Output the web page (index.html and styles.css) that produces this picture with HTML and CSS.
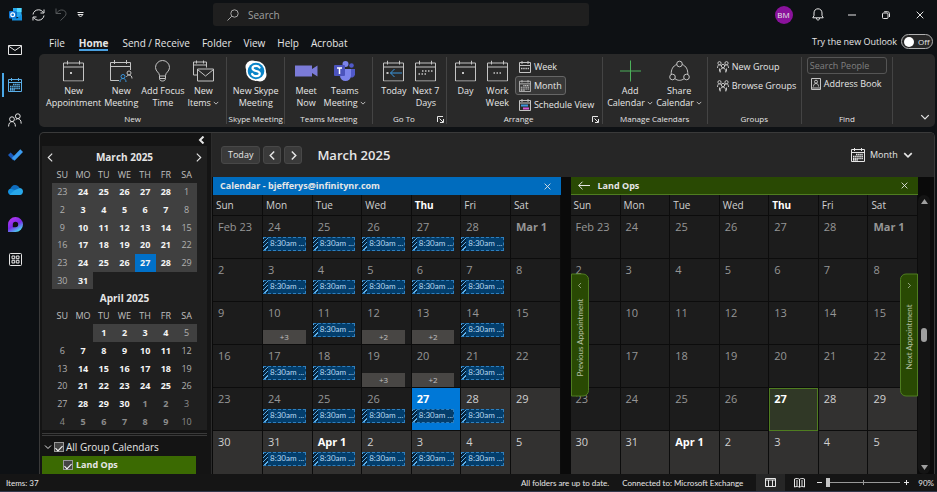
FILE: index.html
```html
<!DOCTYPE html>
<html lang="en">
<head>
    <meta charset="UTF-8">
    <meta name="viewport" content="width=device-width, initial-scale=1.0">
    <title>Calendar - Outlook</title>
    <link rel="stylesheet" href="styles.css">
</head>
<body>

    <!-- Shared icons -->
    <svg class="sprite" aria-hidden="true">
        <symbol id="i-cal" viewBox="0 0 21 21">
            <path d="M.5 2.5h20v18H.5zM.5 6.5h20M4.5 0v4M16.5 0v4" />
        </symbol>
        <symbol id="i-month" viewBox="0 0 14 14">
            <path d="M.5 1.5h13v12H.5zM.5 4.5h13M3.5 0v3M10.5 0v3" />
            <path d="M5 6.5h7M2 8.5h10M2 10.5h10M2 12h5" stroke-dasharray="1.5 .6" stroke-width="1.3" />
        </symbol>
        <symbol id="i-people" viewBox="0 0 14 14">
            <circle cx="9.8" cy="3.2" r="2.4" /><circle cx="4" cy="6.2" r="2.4" />
            <path d="M.6 13.5c0-3 1.400-4.900 3.400-4.900s3.400 1.900 3.400 4.900M7.500 7.200c.6-1 1.400-1.500 2.300-1.500 2 0 3.400 1.900 3.400 4.900" />
        </symbol>
        <symbol id="i-group" viewBox="0 0 12 12">
            <circle cx="2.500" cy="2.200" r="1.600" /><circle cx="9.500" cy="2.200" r="1.600" /><circle cx="6" cy="5" r="1.700" />
            <path d="M.5 7c0-2 .8-3.200 2-3.200.7 0 1.300.4 1.600 1M11.500 7c0-2-.8-3.200-2-3.200-.7 0-1.300.4-1.600 1M3.200 11.500c0-3 1-4.500 2.800-4.500s2.800 1.500 2.800 4.500M2.500 7.500v3M9.500 7.500v3" />
        </symbol>
        <symbol id="i-down" viewBox="0 0 8 8"><path d="M1 2.500l3 3 3-3" /></symbol>
        <symbol id="i-left" viewBox="0 0 8 8"><path d="M5.500 .5L2 4l3.500 3.500" /></symbol>
        <symbol id="i-right" viewBox="0 0 8 8"><path d="M2.500 .5L6 4 2.500 7.500" /></symbol>
        <symbol id="i-close" viewBox="0 0 8 8"><path d="M.7.7l6.600 6.600M7.300.7L.7 7.300" /></symbol>
        <symbol id="i-launch" viewBox="0 0 7 7"><path d="M.5 6V.5H6M2.500 2.500l3.500 3.500M6.500 3v3.500H3" /></symbol>
    </svg>

    <!-- Title bar -->
    <header class="titlebar">
        <div class="quick">
            <svg class="icon" width="13" height="13" viewBox="0 0 13 13">
                <path fill="#28a8ea" d="M4 0h8.500v9H4z" /><path fill="#50d9ff" d="M8 0h4.500v4H8z" /><path fill="#0364b8" d="M4 4h4v5H4z" />
                <path fill="#1490df" d="M3 8l5 2.500L13 6v6.500H3z" /><rect fill="#0f78d4" y="3" width="7.500" height="7.500" rx="1" />
                <circle cx="3.700" cy="6.700" r="1.900" fill="none" stroke="#fff" stroke-width="1.200" />
            </svg>
            <button aria-label="Send/Receive all folders"><svg class="icon line" width="13" height="12" viewBox="0 0 13 12"><path d="M1 5.500C1.300 2.800 3.700.8 6.500.8c2 0 3.800 1 4.700 2.600M12 .5v3.500H8.500M12 6.500c-.3 2.700-2.700 4.700-5.500 4.700-2 0-3.800-1-4.700-2.600M1 11.500V8h3.500" /></svg></button>
            <button aria-label="Undo" class="dim"><svg class="icon line" width="12" height="13" viewBox="0 0 12 13"><path d="M1 .5v5h5M1.300 5.300C3 3 4.800 2 6.800 2c2.500 0 4.200 1.600 4.200 3.700 0 1-.4 1.900-1.200 2.700L5.500 12.500" /></svg></button>
            <button aria-label="Customize toolbar"><svg class="icon line" width="7" height="6" viewBox="0 0 7 6"><path d="M.5.5h6M1 2.500h5L3.500 5z" /></svg></button>
        </div>
        <label class="search">
            <svg class="icon line" width="12" height="12" viewBox="0 0 12 12"><circle cx="7.500" cy="4.500" r="3.700" /><path d="M4.800 7.200L.5 11.500" /></svg>
            <input type="search" placeholder="Search" aria-label="Search">
        </label>
        <div class="window-buttons">
            <button aria-label="Account"><span class="avatar">BM</span></button>
            <button aria-label="Notifications"><svg class="icon line" width="12" height="13" viewBox="0 0 12 13"><path d="M.8 9.800h10.400L10 7.500V5c0-2.500-1.600-4.200-4-4.200S2 2.500 2 5v2.500zM4.500 10c0 1.500.6 2 1.500 2s1.500-.5 1.500-2" /></svg></button>
            <button aria-label="Minimize"><svg class="icon line" width="8" height="8" viewBox="0 0 8 8"><path d="M0 4h8" /></svg></button>
            <button aria-label="Restore"><svg class="icon line" width="8" height="8" viewBox="0 0 8 8"><rect x=".5" y="2" width="5.500" height="5.500" rx="1" /><path d="M2.200.7h3.300c1.200 0 2 .8 2 2v3.300" /></svg></button>
            <button aria-label="Close"><svg class="icon line" width="8" height="8"><use href="#i-close" /></svg></button>
        </div>
    </header>

    <div class="shell">
        <!-- App rail -->
        <nav class="rail" aria-label="Apps">
            <button aria-label="Mail"><svg class="icon line" width="14" height="10" viewBox="0 0 14 10"><path d="M.5.500h13v9H.5zM.5 1l6.500 4.500L13.500 1" /></svg></button>
            <button aria-label="Calendar" class="active"><svg class="icon line" width="14" height="14"><use href="#i-month" /></svg></button>
            <button aria-label="People"><svg class="icon line" width="14" height="14"><use href="#i-people" /></svg></button>
            <button aria-label="To Do"><svg class="icon" width="15" height="12" viewBox="0 0 15 12"><path fill="#195abd" d="M0 6l2.600-2.600L7.700 8.500 5.200 11.500z" /><path fill="#3c9cf0" d="M12.300.3L15 3 6.500 11.700 3.900 9z" /></svg></button>
            <button aria-label="OneDrive"><svg class="icon" width="15" height="10" viewBox="0 0 15 10"><path fill="#0f6cbd" d="M2 5C2.500 2 4.500 0 7 0c2.200 0 4 1.300 4.700 3.200L7 6.500z" /><path fill="#1490df" d="M2.500 3.800C1 4 0 5.300 0 6.800 0 8.600 1.400 10 3 10l6.500-4z" /><path fill="#28a8ea" d="M7 5l4.700-1.900C13.500 3.100 15 4.600 15 6.500S13.600 10 12 10H3L1.500 9.500z" /></svg></button>
            <button aria-label="Loop"><svg class="icon" width="15" height="15" viewBox="0 0 15 15">
                <defs><linearGradient id="loop" x1="0" y1="0" x2=".6" y2="1"><stop offset="0" stop-color="#c03bf0" /><stop offset=".6" stop-color="#7a2be8" /><stop offset="1" stop-color="#49d6f0" /></linearGradient></defs>
                <path fill="url(#loop)" fill-rule="evenodd" d="M0 15V7.500a7.500 7.500 0 1 1 7.500 7.500zM7.500 4.800a2.700 2.700 0 0 0-2.700 2.700v2.700h2.700a2.700 2.700 0 0 0 0-5.400z" /></svg></button>
            <button aria-label="More apps"><svg class="icon line" width="13" height="13" viewBox="0 0 13 13"><rect x=".5" y=".5" width="12" height="12" rx="1" /><path d="M3 3h2.700v2.700H3zM7.300 3H10v2.700H7.300zM3 7.300h2.700V10H3zM7.300 7.300H10V10H7.300z" /></svg></button>
        </nav>

        <div class="workspace">
            <!-- Ribbon tabs -->
            <nav class="tabs" aria-label="Ribbon tabs">
                <button>File</button>
                <button class="active">Home</button>
                <button>Send / Receive</button>
                <button>Folder</button>
                <button>View</button>
                <button>Help</button>
                <button>Acrobat</button>
                <label class="try-new">Try the new Outlook
                    <span class="switch"><input type="checkbox" role="switch"><span>Off</span></span>
                </label>
            </nav>

            <!-- Ribbon -->
            <section class="ribbon">
                <div class="group">
                    <div class="tools">
                        <button class="tool"><svg class="icon line" width="21" height="21" viewBox="0 0 21 21"><use href="#i-cal" /><path d="M7 12.500h2" stroke-width="2" /></svg><span>New<br>Appointment</span></button>
                        <button class="tool"><svg class="icon line" width="23" height="22" viewBox="0 0 23 22"><path d="M9 20.500H.5v-18h20V10M.5 6.500h20M4.500 0v4M16.500 0v4" /><g stroke="#3a96dd"><circle cx="13" cy="16.500" r="2" /><path d="M10 22c0-2.200 1.200-3.500 3-3.500s3 1.300 3 3.500" /></g><circle cx="19" cy="13" r="2" /><path d="M16.500 17c.5-1.300 1.400-2 2.500-2 1.800 0 3 1.300 3 3.500" /></svg><span>New<br>Meeting</span></button>
                        <button class="tool"><svg class="icon line" width="15" height="21" viewBox="0 0 15 21"><path d="M4.500 15c0-3-4-4-4-8a7 7 0 0 1 14 0c0 4-4 5-4 8v3c0 1.500-1 2.500-3 2.500s-3-1-3-2.500zM4.500 15.500h6M4.500 18h6" /></svg><span>Add Focus<br>Time</span></button>
                        <button class="tool"><svg class="icon line" width="21" height="21" viewBox="0 0 21 21"><path d="M4 14.500H.5v-13h13V7M.5 4.500h13M3.500 0v3M10.500 0v3M4.500 8.500h16v12h-16zM4.500 9l8 6.500 8-6.500" /></svg><span>New<br>Items <svg class="icon line" width="6" height="6"><use href="#i-down" /></svg></span></button>
                    </div>
                    <div class="caption"><span>New</span></div>
                </div>
                <div class="group">
                    <div class="tools">
                        <button class="tool"><svg class="icon" width="22" height="22" viewBox="0 0 22 22"><circle cx="11" cy="11" r="10" fill="#fff" /><circle cx="7" cy="7" r="6.500" fill="#fff" /><circle cx="15" cy="15" r="6.500" fill="#fff" /><circle cx="11" cy="11" r="8.300" fill="#0a84c8" /><path d="M14.500 7.500C13.500 6 12 5.800 11 5.800c-2 0-3.500 1-3.500 2.500 0 3.700 7.300 1.700 7.300 5.200 0 1.700-1.600 2.700-3.700 2.700-1.700 0-3.200-.6-4-2.200" fill="none" stroke="#fff" stroke-width="2.200" stroke-linecap="round" /></svg><span>New Skype<br>Meeting</span></button>
                    </div>
                    <div class="caption"><span>Skype Meeting</span></div>
                </div>
                <div class="group">
                    <div class="tools">
                        <button class="tool"><svg class="icon" width="23" height="21" viewBox="0 0 23 21"><path fill="#7b7bd8" d="M0 5h17v3.500L22.500 5v11L17 12.500V16H0z" /></svg><span>Meet<br>Now</span></button>
                        <button class="tool"><svg class="icon" width="21" height="21" viewBox="0 0 21 21"><circle cx="17.500" cy="5" r="2.300" fill="#5059c9" /><circle cx="11.500" cy="3.500" r="3" fill="#7b83eb" /><path fill="#5059c9" d="M14 8.500h7V14a3.500 3.500 0 0 1-6 2z" /><path fill="#7b83eb" d="M6 8.500h11V15a5.500 5.500 0 0 1-11 0z" /><rect y="4.500" width="11" height="11" rx="1" fill="#4b53bc" /><path d="M3 7.500h5M5.500 7.500v6" stroke="#fff" stroke-width="1.500" /></svg><span>Teams<br>Meeting <svg class="icon line" width="6" height="6"><use href="#i-down" /></svg></span></button>
                    </div>
                    <div class="caption"><span>Teams Meeting</span></div>
                </div>
                <div class="group">
                    <div class="tools">
                        <button class="tool"><svg class="icon line" width="21" height="21" viewBox="0 0 21 21"><use href="#i-cal" /><path d="M3.500 12.500h2" stroke-width="2" /><path stroke="#3a96dd" d="M7.500 12.500H19M11.500 8.500l-4 4 4 4" /></svg><span>Today</span></button>
                        <button class="tool"><svg class="icon line" width="21" height="21" viewBox="0 0 21 21"><use href="#i-cal" /><path d="M7 10.500h11M3.500 13.500h8" stroke-width="1.500" stroke-dasharray="1.500 1.500" /></svg><span>Next 7<br>Days</span></button>
                    </div>
                    <div class="caption"><span>Go To</span><button aria-label="Go To options"><svg class="icon line" width="7" height="7"><use href="#i-launch" /></svg></button></div>
                </div>
                <div class="group">
                    <div class="tools">
                        <button class="tool"><svg class="icon line" width="21" height="21" viewBox="0 0 21 21"><use href="#i-cal" /><path d="M7 12.500h2" stroke-width="2" /></svg><span>Day</span></button>
                        <button class="tool"><svg class="icon line" width="21" height="21" viewBox="0 0 21 21"><use href="#i-cal" /><path d="M6.500 12.500h8" stroke-width="1.500" stroke-dasharray="1.500 1.500" /></svg><span>Work<br>Week</span></button>
                        <div class="stack">
                            <button class="row"><svg class="icon line" width="12" height="12" viewBox="0 0 12 12"><path d="M.5 1.500h11v10H.5zM.5 4.500h11M3 0v3M9 0v3" /><path d="M2 7.500h8" stroke-width="1.500" stroke-dasharray="1.500 .7" /></svg>Week</button>
                            <button class="row active"><svg class="icon line" width="12" height="12"><use href="#i-month" /></svg>Month</button>
                            <button class="row"><svg class="icon line" width="12" height="12" viewBox="0 0 12 12"><path d="M.5 1.500h11v10H.5zM.5 4h11M3 0v3M9 0v3" /><path stroke="#3a96dd" stroke-width="2" d="M2 6.500h7" /><path stroke="#d659d6" stroke-width="2" d="M4 9.500h6" /></svg>Schedule View</button>
                        </div>
                    </div>
                    <div class="caption"><span>Arrange</span><button aria-label="Arrange options"><svg class="icon line" width="7" height="7"><use href="#i-launch" /></svg></button></div>
                </div>
                <div class="group">
                    <div class="tools">
                        <button class="tool"><svg class="icon line green" width="21" height="21" viewBox="0 0 21 21"><path d="M10.500 0v21M0 10.500h21" /></svg><span>Add<br>Calendar <svg class="icon line" width="6" height="6"><use href="#i-down" /></svg></span></button>
                        <button class="tool"><svg class="icon line" width="21" height="21" viewBox="0 0 21 21"><circle cx="10.500" cy="3.500" r="2.800" /><circle cx="3.500" cy="16.500" r="2.800" /><circle cx="17.500" cy="16.500" r="2.800" /><path d="M7.700 4C4 5.500 2 9 2.200 13.800M13.300 4c3.700 1.500 5.700 5 5.500 9.800M6 18.200c2.800 2.200 6.200 2.200 9 0" /></svg><span>Share<br>Calendar <svg class="icon line" width="6" height="6"><use href="#i-down" /></svg></span></button>
                    </div>
                    <div class="caption"><span>Manage Calendars</span></div>
                </div>
                <div class="group">
                    <div class="tools start">
                        <div class="stack">
                            <button class="row"><svg class="icon line" width="12" height="12"><use href="#i-group" /></svg>New Group</button>
                            <button class="row"><svg class="icon line" width="12" height="12"><use href="#i-group" /></svg>Browse Groups</button>
                        </div>
                    </div>
                    <div class="caption"><span>Groups</span></div>
                </div>
                <div class="group">
                    <div class="tools start">
                        <div class="stack find">
                            <input type="text" placeholder="Search People" aria-label="Search People">
                            <button class="row"><svg class="icon line" width="10" height="12" viewBox="0 0 10 12"><path d="M.5.5h9v11h-9zM.5 10h9" /><circle cx="5" cy="3.700" r="1.500" /><path d="M2.500 8.500c0-2 1-3 2.500-3s2.500 1 2.500 3" /></svg>Address Book</button>
                        </div>
                    </div>
                    <div class="caption"><span>Find</span></div>
                </div>
                <button class="collapse" aria-label="Collapse ribbon"><svg class="icon line" width="10" height="10"><use href="#i-down" /></svg></button>
            </section>

            <main class="content">
                <!-- Date navigator and calendar list -->
                <aside class="sidebar">
                    <button class="fold" aria-label="Collapse pane"><svg class="icon line bold" width="8" height="8"><use href="#i-left" /></svg></button>
                    <div class="navigator">
                        <div class="months">
                            <table class="mini" id="mini-march"></table>
                            <table class="mini" id="mini-april"></table>
                        </div>
                        <button class="prev" aria-label="Previous month"><svg class="icon line" width="9" height="9"><use href="#i-left" /></svg></button>
                        <button class="next" aria-label="Next month"><svg class="icon line" width="9" height="9"><use href="#i-right" /></svg></button>
                    </div>
                    <div class="calendar-list">
                        <label class="all"><svg class="icon line" width="8" height="8"><use href="#i-down" /></svg><input type="checkbox" checked>All Group Calendars</label>
                        <label class="item"><input type="checkbox" checked>Land Ops</label>
                    </div>
                </aside>

                <section class="view">
                    <div class="view-bar">
                        <button class="box">Today</button>
                        <button class="box arrow" aria-label="Previous"><svg class="icon line" width="9" height="9"><use href="#i-left" /></svg></button>
                        <button class="box arrow" aria-label="Next"><svg class="icon line" width="9" height="9"><use href="#i-right" /></svg></button>
                        <h1>March 2025</h1>
                        <label class="view-picker">
                            <svg class="icon line" width="14" height="14"><use href="#i-month" /></svg>
                            <select aria-label="View">
                                <option>Month</option>
                                <option>Week</option>
                                <option>Day</option>
                            </select>
                            <svg class="icon line" width="10" height="10"><use href="#i-down" /></svg>
                        </label>
                    </div>

                    <div class="calendars">
                        <div class="calendar blue">
                            <div class="calendar-head">
                                <h2>Calendar - bjefferys@infinitynr.com</h2>
                                <button aria-label="Close calendar"><svg class="icon line" width="7" height="7"><use href="#i-close" /></svg></button>
                            </div>
                            <div class="sheet"><table class="month" id="mine"></table></div>
                        </div>
                        <div class="calendar green">
                            <div class="calendar-head">
                                <button aria-label="Overlay"><svg class="icon line" width="12" height="9" viewBox="0 0 12 9"><path d="M.7 4.500H12M4.500.7L.7 4.500l3.800 3.800" /></svg></button>
                                <h2>Land Ops</h2>
                                <button aria-label="Close calendar"><svg class="icon line" width="7" height="7"><use href="#i-close" /></svg></button>
                            </div>
                            <div class="sheet">
                                <table class="month" id="ops"></table>
                                <button class="handle before"><svg class="icon line" width="6" height="6"><use href="#i-left" /></svg><span>Previous Appointment</span></button>
                                <button class="handle after"><svg class="icon line" width="6" height="6"><use href="#i-right" /></svg><span>Next Appointment</span></button>
                            </div>
                        </div>
                        <div class="scrollbar" aria-hidden="true">
                            <svg width="7" height="5" viewBox="0 0 7 5"><path d="M3.500 0L7 5H0z" /></svg>
                            <span class="thumb"></span>
                            <svg width="7" height="5" viewBox="0 0 7 5"><path d="M3.500 5L7 0H0z" /></svg>
                        </div>
                    </div>
                </section>
            </main>
        </div>
    </div>

    <!-- Status bar -->
    <footer class="status">
        <span class="count">Items: 37</span>
        <span>All folders are up to date.</span>
        <span>Connected to: Microsoft Exchange</span>
        <div class="modes">
            <button class="active" aria-label="Normal view"><svg class="icon line" width="11" height="9" viewBox="0 0 11 9"><path d="M.5.500h10v8H.5zM.5 2h10M3.500 2v6.500M7.500 2v6.500" /></svg></button>
            <button aria-label="Reading view"><svg class="icon line" width="11" height="10" viewBox="0 0 11 10"><path d="M.5 1c2-.7 3.700-.7 5 .3 1.300-1 3-1 5-.3v8c-2-.7-3.700-.7-5 .3-1.300-1-3-1-5-.3zM5.500 1v8M2 3h2M2 5h2M2 7h2M7 3h2M7 5h2M7 7h2" /></svg></button>
        </div>
        <div class="zoom">
            <button aria-label="Zoom out"><svg class="icon line" width="5" height="5" viewBox="0 0 5 5"><path d="M0 2.500h5" /></svg></button>
            <input type="range" min="0" max="100" value="0" aria-label="Zoom">
            <button aria-label="Zoom in"><svg class="icon line" width="5" height="5" viewBox="0 0 5 5"><path d="M0 2.500h5M2.500 0v5" /></svg></button>
            <span>90%</span>
        </div>
    </footer>

    <script src="script.js"></script>
</body>
</html>
```
FILE: styles.css
```css
/* Base */
* {
    box-sizing: border-box;
}
body {
    margin: 0;
    height: 100vh;
    display: flex;
    flex-direction: column;
    background: #0e1114;
    color: #e6e6e6;
    font-family: "Open Sans", "Noto Sans", sans-serif;
    font-size: 9px;
    line-height: 12px;
    overflow: hidden;
}
button,
input,
select {
    margin: 0;
    padding: 0;
    border: 0;
    background: none;
    color: inherit;
    font: inherit;
}
button {
    display: flex;
    align-items: center;
    justify-content: center;
    white-space: nowrap;
}
h1,
h2 {
    margin: 0;
}
table {
    border-collapse: collapse;
    table-layout: fixed;
}
.sprite {
    position: absolute;
    width: 0;
    height: 0;
}
.icon {
    flex: none;
}
.line {
    fill: none;
    stroke: currentColor;
    stroke-width: 1;
}
.bold {
    stroke-width: 2;
}
.green.line {
    stroke: #4cb05a;
}

/* Title bar */
.titlebar {
    display: flex;
    align-items: center;
    height: 29px;
    flex: none;
}
.quick {
    display: flex;
    align-items: center;
    gap: 10px;
    width: 213px;
    padding-left: 9px;
}
.quick .dim {
    color: #55585a;
}
.search {
    display: flex;
    align-items: center;
    gap: 9px;
    flex: 0 1 376px;
    height: 23px;
    padding: 0 14px;
    border-radius: 3px;
    background: #1f1f1f;
    color: #a8a8a8;
    font-size: 10px;
}
.search input {
    flex: 1;
    outline: 0;
}
::placeholder {
    color: #a0a0a0;
    opacity: 1;
}
.window-buttons {
    display: flex;
    margin-left: auto;
}
.window-buttons button {
    width: 34px;
    height: 28px;
}
.window-buttons button:first-child {
    width: 35px;
}
.avatar {
    width: 18px;
    border-radius: 50%;
    background: #8a129c;
    font-size: 8px;
    line-height: 18px;
}

/* Shell */
.shell {
    display: flex;
    flex: 1;
    min-height: 0;
}
.rail {
    display: flex;
    flex-direction: column;
    width: 39px;
    padding-top: 3px;
}
.rail button {
    width: 30px;
    height: 35px;
}
.rail .active {
    position: relative;
    color: #5aaee8;
}
.rail .active::before {
    content: "";
    position: absolute;
    left: 2px;
    width: 2px;
    height: 24px;
    background: #4aa8e8;
}
.workspace {
    display: flex;
    flex: 1;
    flex-direction: column;
    min-width: 0;
    padding-right: 2px;
}

/* Tabs */
.tabs {
    display: flex;
    align-items: center;
    gap: 12px;
    height: 25px;
    flex: none;
    padding-left: 10px;
    font-size: 10px;
}
.tabs button {
    height: 18px;
    padding-top: 4px;
    border-bottom: 2px solid transparent;
}
.tabs .active {
    margin: 0 2px;
    border-color: #4aa0e0;
    font-weight: 700;
}
.try-new {
    display: flex;
    align-items: center;
    gap: 4px;
    margin-left: auto;
    padding-right: 2px;
    font-size: 9px;
    white-space: nowrap;
}
.switch {
    display: flex;
    align-items: center;
    gap: 4px;
    width: 32px;
    height: 15px;
    padding-left: 2px;
    border: 1px solid #b0b0b0;
    border-radius: 8px;
    background: #262626;
    font-size: 8px;
}
.switch input {
    appearance: none;
    width: 10px;
    height: 10px;
    border-radius: 50%;
    background: #fff;
}

/* Ribbon */
.ribbon {
    display: grid;
    grid-template-columns: 188fr 58fr 88fr 74fr 155fr 105fr 94fr 91fr 42fr;
    flex: none;
    height: 73px;
    border-radius: 5px;
    background: #292929;
}
.group {
    display: flex;
    flex-direction: column;
    min-width: 0;
    margin: 3px 0;
    border-right: 1px solid #444;
}
.tools {
    display: flex;
    flex: 1;
    justify-content: center;
    gap: 3px;
    padding-top: 3px;
}
.tools.start {
    justify-content: flex-start;
    padding-left: 5px;
}
.tool {
    flex-direction: column;
    justify-content: flex-start;
    gap: 3px;
    min-width: 29px;
}
.tool > .icon,
.row .icon {
    color: #c4c4c4;
}
.tool > .icon {
    height: 22px;
}
.stack {
    display: flex;
    flex-direction: column;
    align-items: flex-start;
    margin-top: -3px;
}
.row {
    gap: 3px;
    height: 19px;
    padding: 0 3px;
    border: 1px solid transparent;
    border-radius: 3px;
}
.row.active {
    border-color: #666;
    background: #383838;
}
.find input {
    width: 80px;
    height: 17px;
    padding: 0 2px;
    border: 1px solid #555;
    border-radius: 3px;
}
.find input::placeholder {
    color: #808080;
}
.caption {
    display: flex;
    align-items: center;
    justify-content: center;
    font-size: 8px;
    line-height: 10px;
    white-space: nowrap;
}
.caption span {
    flex: 1;
    text-align: center;
}
.caption button {
    width: 12px;
}
.collapse {
    align-self: end;
    justify-self: end;
    padding: 0 5px 5px 0;
}

/* Content */
.content {
    display: flex;
    flex: 1;
    min-height: 0;
    margin-top: 5px;
    border: 1px solid #3a3a3a;
    border-bottom: 0;
    border-radius: 5px 5px 0 0;
    background: #141414;
    overflow: hidden;
}

/* Sidebar */
.sidebar {
    display: flex;
    flex: none;
    flex-direction: column;
    width: 172px;
    padding: 0 4px 0 2px;
    border-right: 1px solid #2c2c2c;
}
.fold {
    align-self: flex-end;
    height: 16px;
    padding-right: 1px;
}
.navigator {
    display: grid;
    align-items: start;
    padding-top: 2px;
    background: #1f1f1f;
}
.navigator > * {
    grid-area: 1 / 1;
}
.navigator button {
    height: 18px;
    padding: 0 4px;
}
.months {
    justify-self: center;
}
.prev {
    justify-self: start;
}
.next {
    justify-self: end;
}
.mini {
    width: 145px;
    text-align: center;
}
.mini caption {
    height: 18px;
    font-size: 10px;
    font-weight: 700;
    line-height: 18px;
}
.mini th {
    height: 17px;
    font-weight: 400;
    color: #c0c0c0;
}
.mini td {
    height: 18px;
    padding: 0;
    color: #b0b0b0;
}
.mini tr:nth-child(3n) td {
    height: 17px;
}
.mini .busy {
    color: #f4f4f4;
    font-weight: 700;
}
.mini .shown {
    background: #404040;
}
.mini .outside {
    color: #8c8c8c;
}
.mini .today {
    background: #0070c8;
}
.calendar-list {
    margin-top: 3px;
    padding-top: 2px;
    border-top: 3px double #3a3a3a;
}
.calendar-list label {
    display: flex;
    align-items: center;
    gap: 2px;
    height: 18px;
}
.calendar-list .all {
    padding-left: 2px;
    font-size: 10px;
}
.calendar-list .item {
    gap: 3px;
    width: 154px;
    padding-left: 21px;
    background: #3b6a02;
    font-weight: 700;
}
.calendar-list input {
    appearance: none;
    display: grid;
    place-items: center;
    width: 10px;
    height: 10px;
    border: 1px solid #999;
    background: #444;
}
.calendar-list input:checked::after {
    content: "";
    width: 3px;
    height: 6px;
    border: solid #fff;
    border-width: 0 1px 1px 0;
    transform: rotate(45deg);
}

/* Month view */
.view {
    display: flex;
    flex: 1;
    flex-direction: column;
    min-width: 0;
}
.view-bar {
    display: flex;
    align-items: center;
    gap: 3px;
    height: 44px;
    flex: none;
    padding: 0 21px 0 9px;
    background: #262626;
}
.view-bar .icon:not([width="14"]) {
    stroke-width: 1.3;
}
.box {
    height: 18px;
    padding: 0 6px;
    border: 1px solid #484848;
    border-radius: 3px;
    background: #3a3a3a;
}
.box.arrow {
    width: 18px;
    padding: 0;
}
.view-bar h1 {
    margin-left: 12px;
    font-size: 13px;
    font-weight: 600;
}
.view-picker {
    display: flex;
    align-items: center;
    gap: 5px;
    margin-left: auto;
}
.view-picker select {
    appearance: none;
    width: 28px;
}
.calendars {
    display: flex;
    flex: 1;
    min-height: 0;
    padding: 0 4px 0 1px;
    background: #0a0a0a;
}
.calendar {
    display: flex;
    flex: 1;
    flex-direction: column;
    min-width: 0;
}
.calendar.green {
    margin-left: 10px;
}
.calendar-head {
    display: flex;
    align-items: center;
    gap: 8px;
    height: 18px;
    flex: none;
    padding: 0 10px 0 7px;
}
.calendar-head h2 {
    flex: 1;
    font-size: 9px;
    font-weight: 700;
    white-space: nowrap;
}
.blue .calendar-head {
    background: #006cbe;
}
.green .calendar-head {
    border-bottom: 1px solid #4f7d20;
    background: #294903;
}
.sheet {
    position: relative;
    flex: 1;
    min-height: 0;
}
.month {
    width: 100%;
    height: 100%;
    background: #1c1c1c;
}
.month th {
    height: 20px;
    padding: 0 0 0 3px;
    border-right: 1px solid #0c0c0c;
    font-size: 10px;
    font-weight: 400;
    text-align: left;
    color: #d0d0d0;
}
.month th.today {
    color: #fff;
    font-weight: 700;
}
.month td {
    height: 43px;
    padding: 4px 0 0;
    border-top: 1px solid #0c0c0c;
    border-right: 1px solid #0c0c0c;
    color: #969696;
    vertical-align: top;
}
.day {
    display: flex;
    flex-direction: column;
    gap: 4px;
}
.day time {
    padding-left: 5px;
    font-size: 11px;
    line-height: 13px;
}
.day .first {
    font-weight: 700;
}
.month .future {
    background: #323130;
    color: #d0d0d0;
}
.month .future .first {
    color: #fff;
}
.month .now {
    color: #fff;
    font-weight: 700;
}
.blue .now {
    background: #0078d7;
}
.green .now {
    outline: 1px solid #4f7d20;
    outline-offset: -1px;
    background: #303826;
}
.event {
    height: 14px;
    margin-right: 6px;
    padding-left: 7px;
    border: 1px dashed #2f7fbd;
    border-left: 0;
    background: repeating-linear-gradient(135deg, #5aaee8 0 1px, #06233c 1px 3px) left / 5px 100% no-repeat, #033e6c;
    color: #b8d8f0;
    font-family: Lato, "Open Sans", sans-serif;
    font-size: 8px;
    font-weight: 400;
    line-height: 11px;
    white-space: nowrap;
    overflow: hidden;
}
.more {
    height: 14px;
    margin: 7px 6px 0 0;
    background: #484644;
    color: #c0c0c0;
    font-size: 8px;
    line-height: 14px;
    text-align: center;
}

/* Appointment handles over the sheet */
.handle {
    position: absolute;
    top: 50%;
    flex-direction: column;
    justify-content: flex-start;
    gap: 10px;
    width: 18px;
    height: 123px;
    padding-top: 8px;
    border: 1px solid #4f7d20;
    background: #294903;
    color: #b4c0a4;
    font-family: Lato, "Open Sans", sans-serif;
    font-size: 8px;
    transform: translateY(-50%);
}
.handle span {
    writing-mode: vertical-rl;
    transform: rotate(180deg);
}
.before {
    left: 0;
    border-radius: 0 6px 6px 0;
}
.after {
    right: 0;
    gap: 16px;
    border-radius: 6px 0 0 6px;
}
.scrollbar {
    display: flex;
    flex-direction: column;
    align-items: center;
    justify-content: space-between;
    width: 12px;
    margin-top: 18px;
    padding: 4px 0;
    border-radius: 6px;
    background: #141414;
    fill: #a0a0a0;
}
.thumb {
    width: 6px;
    height: 14px;
    border-radius: 3px;
    background: #a0a0a0;
}

/* Status bar */
.status {
    display: flex;
    align-items: center;
    gap: 13px;
    flex: none;
    height: 18px;
    padding: 0 3px 0 6px;
    border-bottom: 1px solid #33384c;
    background: #151515;
    font-family: Lato, "Open Sans", sans-serif;
    font-size: 8px;
    white-space: nowrap;
}
.count {
    margin-right: auto;
}
.modes {
    display: flex;
}
.modes button {
    width: 29px;
    height: 17px;
}
.modes .active {
    background: #262626;
}
.zoom {
    display: flex;
    align-items: center;
    gap: 4px;
    margin-left: -10px;
}
.zoom span {
    margin-left: 5px;
}
.zoom input {
    appearance: none;
    width: 74px;
    height: 9px;
    background: linear-gradient(#999, #999) center / 100% 1px no-repeat, linear-gradient(#999, #999) center / 1px 5px no-repeat;
}
.zoom input::-webkit-slider-thumb {
    appearance: none;
    width: 4px;
    height: 9px;
    background: #c4c4c4;
}
```
FILE: script.js
```js
// Date navigator: each cell is "day:flags"
// b = busy, s = in the shown range, o = outside the month, t = today
const miniMonths = {
    'mini-march': {
        title: 'March 2025',
        rows: [
            '23:s 24:sb 25:sb 26:sb 27:sb 28:sb 1:s',
            '2:s 3:sb 4:sb 5:sb 6:sb 7:sb 8:s',
            '9:s 10:sb 11:sb 12:sb 13:sb 14:sb 15:s',
            '16:s 17:sb 18:sb 19:sb 20:sb 21:sb 22:s',
            '23:s 24:sb 25:sb 26:sb 27:tb 28:sb 29:s',
            '30:s 31:sb : : : : :'
        ]
    },
    'mini-april': {
        title: 'April 2025',
        rows: [
            ': : 1:sb 2:sb 3:sb 4:sb 5:s',
            '6: 7:b 8:b 9:b 10:b 11:b 12:',
            '13: 14:b 15:b 16:b 17:b 18:b 19:',
            '20: 21:b 22:b 23:b 24:b 25:b 26:',
            '27: 28:b 29:b 30:b 1:ob 2:ob 3:o',
            '4:o 5:ob 6:ob 7:ob 8:ob 9:ob 10:o'
        ]
    }
};
const flagNames = { b: 'busy', s: 'shown', o: 'outside', t: 'today' };

for (const [id, month] of Object.entries(miniMonths)) {
    const head = ['SU', 'MO', 'TU', 'WE', 'TH', 'FR', 'SA'].map(d => `<th>${d}</th>`).join('');
    const body = month.rows.map(row => '<tr>' + row.split(' ').map(cell => {
        const [day, flags] = cell.split(':');
        const names = [...flags].map(f => flagNames[f]).join(' ');
        return `<td class="${names}">${day}</td>`;
    }).join('') + '</tr>').join('');
    document.getElementById(id).innerHTML =
        `<caption>${month.title}</caption><thead><tr>${head}</tr></thead><tbody>${body}</tbody>`;
}

// Month sheets: days with too many entries show a count instead
const overflow = { 15: '+3', 17: '+2', 18: '+2', 24: '+3', 25: '+2' };

function dayLabel(date, index) {
    const name = date.toLocaleString('en-US', { month: 'short' });
    return index === 0 || date.getDate() === 1 ? `${name} ${date.getDate()}` : date.getDate();
}

function drawMonth(id, withEvents) {
    const today = 32;
    let html = '<thead><tr>' + ['Sun', 'Mon', 'Tue', 'Wed', 'Thu', 'Fri', 'Sat'].map(d =>
        `<th class="${d === 'Thu' ? 'today' : ''}">${d}</th>`).join('') + '</tr></thead><tbody>';
    for (let week = 0; week < 6; week++) {
        html += '<tr>';
        for (let d = 0; d < 7; d++) {
            const i = week * 7 + d;
            const date = new Date(2025, 1, 23 + i);
            const state = i === today ? 'now' : i > today ? 'future' : '';
            let entry = '';
            if (withEvents && d > 0 && d < 6) {
                entry = overflow[i]
                    ? `<div class="more">${overflow[i]}</div>`
                    : '<div class="event">8:30am ...</div>';
            }
            const first = date.getDate() === 1 ? 'first' : '';
            html += `<td class="${state}"><div class="day"><time class="${first}">${dayLabel(date, i)}</time>${entry}</div></td>`;
        }
        html += '</tr>';
    }
    document.getElementById(id).innerHTML = html + '</tbody>';
}

drawMonth('mine', true);
drawMonth('ops', false);
```
